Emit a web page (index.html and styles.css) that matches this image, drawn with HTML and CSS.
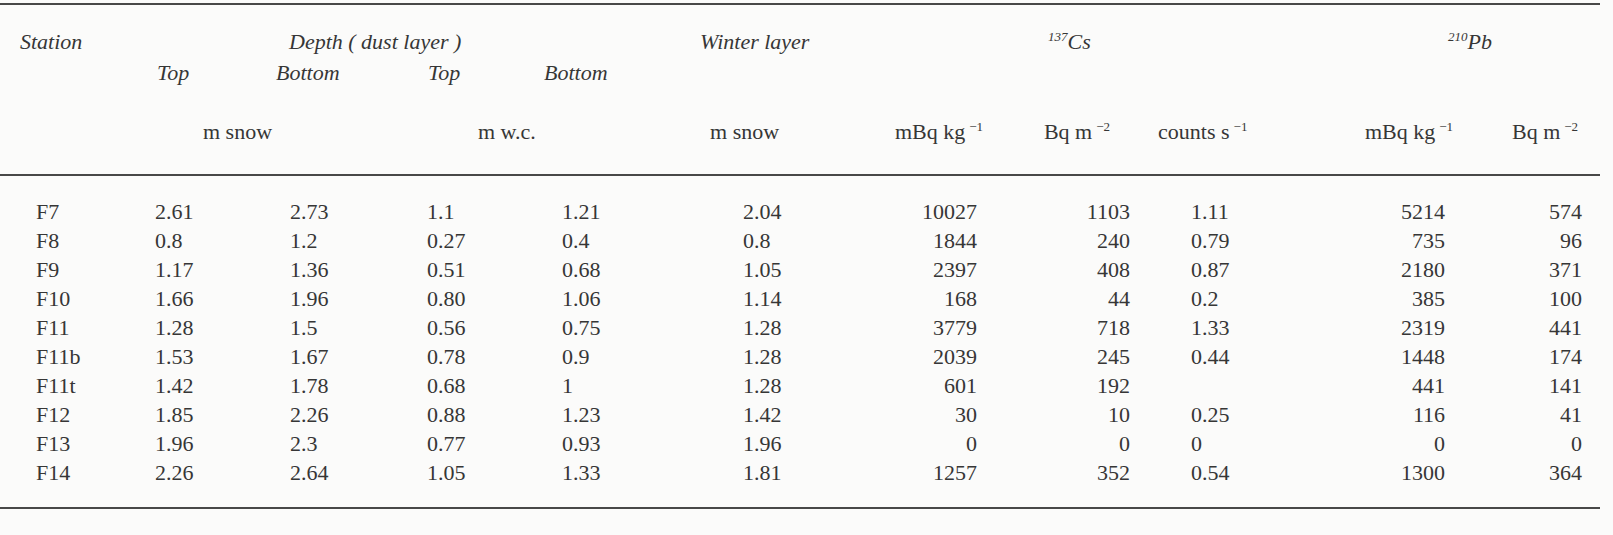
FILE: index.html
```html
<!DOCTYPE html>
<html>
<head>
<meta charset="utf-8">
<link rel="stylesheet" href="styles.css">
</head>
<body>
<table class="data">
  <colgroup>
    <col class="w150"><col class="w120"><col class="w150"><col class="w120"><col class="w160"><col class="w160"><col class="w140"><col class="w150"><col class="w150"><col class="w170"><col class="w130">
  </colgroup>
  <thead>
    <tr class="r1">
      <th class="h-station">Station</th>
      <th colspan="4" class="h-depth">Depth ( dust layer )</th>
      <th class="h-winter">Winter layer</th>
      <th colspan="3" class="h-cs"><sup>137</sup>Cs</th>
      <th colspan="2" class="h-pb"><sup>210</sup>Pb</th>
    </tr>
    <tr class="r2">
      <th></th>
      <th class="s-top1">Top</th>
      <th class="s-bot1">Bottom</th>
      <th class="s-top2">Top</th>
      <th class="s-bot2">Bottom</th>
      <th></th><th></th><th></th><th></th><th></th><th></th>
    </tr>
    <tr class="r3">
      <th></th>
      <th colspan="2" class="u-snow1">m snow</th>
      <th colspan="2" class="u-we">m w.c.</th>
      <th class="u-snow2">m snow</th>
      <th class="u-cskg">mBq kg<sup>−1</sup></th>
      <th class="u-csm">Bq m<sup>−2</sup></th>
      <th class="u-counts">counts s<sup>−1</sup></th>
      <th class="u-pbkg">mBq kg<sup>−1</sup></th>
      <th class="u-pbm">Bq m<sup>−2</sup></th>
    </tr>
  </thead>
  <tbody>
    <tr><td class="c1">F7</td><td class="c2">2.61</td><td class="c3">2.73</td><td class="c4">1.1</td><td class="c5">1.21</td><td class="c6">2.04</td><td class="c7">10027</td><td class="c8">1103</td><td class="c9">1.11</td><td class="c10">5214</td><td class="c11">574</td></tr>
    <tr><td class="c1">F8</td><td class="c2">0.8</td><td class="c3">1.2</td><td class="c4">0.27</td><td class="c5">0.4</td><td class="c6">0.8</td><td class="c7">1844</td><td class="c8">240</td><td class="c9">0.79</td><td class="c10">735</td><td class="c11">96</td></tr>
    <tr><td class="c1">F9</td><td class="c2">1.17</td><td class="c3">1.36</td><td class="c4">0.51</td><td class="c5">0.68</td><td class="c6">1.05</td><td class="c7">2397</td><td class="c8">408</td><td class="c9">0.87</td><td class="c10">2180</td><td class="c11">371</td></tr>
    <tr><td class="c1">F10</td><td class="c2">1.66</td><td class="c3">1.96</td><td class="c4">0.80</td><td class="c5">1.06</td><td class="c6">1.14</td><td class="c7">168</td><td class="c8">44</td><td class="c9">0.2</td><td class="c10">385</td><td class="c11">100</td></tr>
    <tr><td class="c1">F11</td><td class="c2">1.28</td><td class="c3">1.5</td><td class="c4">0.56</td><td class="c5">0.75</td><td class="c6">1.28</td><td class="c7">3779</td><td class="c8">718</td><td class="c9">1.33</td><td class="c10">2319</td><td class="c11">441</td></tr>
    <tr><td class="c1">F11b</td><td class="c2">1.53</td><td class="c3">1.67</td><td class="c4">0.78</td><td class="c5">0.9</td><td class="c6">1.28</td><td class="c7">2039</td><td class="c8">245</td><td class="c9">0.44</td><td class="c10">1448</td><td class="c11">174</td></tr>
    <tr><td class="c1">F11t</td><td class="c2">1.42</td><td class="c3">1.78</td><td class="c4">0.68</td><td class="c5">1</td><td class="c6">1.28</td><td class="c7">601</td><td class="c8">192</td><td class="c9"></td><td class="c10">441</td><td class="c11">141</td></tr>
    <tr><td class="c1">F12</td><td class="c2">1.85</td><td class="c3">2.26</td><td class="c4">0.88</td><td class="c5">1.23</td><td class="c6">1.42</td><td class="c7">30</td><td class="c8">10</td><td class="c9">0.25</td><td class="c10">116</td><td class="c11">41</td></tr>
    <tr><td class="c1">F13</td><td class="c2">1.96</td><td class="c3">2.3</td><td class="c4">0.77</td><td class="c5">0.93</td><td class="c6">1.96</td><td class="c7">0</td><td class="c8">0</td><td class="c9">0</td><td class="c10">0</td><td class="c11">0</td></tr>
    <tr><td class="c1">F14</td><td class="c2">2.26</td><td class="c3">2.64</td><td class="c4">1.05</td><td class="c5">1.33</td><td class="c6">1.81</td><td class="c7">1257</td><td class="c8">352</td><td class="c9">0.54</td><td class="c10">1300</td><td class="c11">364</td></tr>
  </tbody>
</table>
</body>
</html>
```

FILE: styles.css
```css
html, body {
  margin: 0;
  padding: 0;
  background: #fbfbfa;
}

body {
  padding-top: 3px;
}

.data {
  border-collapse: collapse;
  table-layout: fixed;
  width: 1600px;
  font-family: "Liberation Serif", "Times New Roman", serif;
  color: #363636;
  border-top: 2px solid #484848;
  border-bottom: 2px solid #484848;
}

.w120 { width: 120px; }
.w130 { width: 130px; }
.w140 { width: 140px; }
.w150 { width: 150px; }
.w160 { width: 160px; }
.w170 { width: 170px; }

.data th,
.data td {
  padding: 0;
  font-weight: normal;
  white-space: nowrap;
  text-align: left;
  vertical-align: top;
}

.data sup {
  font-size: 13px;
  line-height: 0;
  vertical-align: 8px;
}

/* header row 1 */
.r1 th {
  font-style: italic;
  font-size: 22px;
  line-height: 24px;
  padding-top: 25px;
}
.r1 .h-station { padding-left: 20px; }
.r1 .h-depth { padding-left: 139px; }
.r1 .h-winter { padding-left: 0; }
.r1 .h-cs { padding-left: 188px; }
.r1 .h-pb { padding-left: 148px; }

/* header row 2 */
.r2 th {
  font-style: italic;
  font-size: 22px;
  line-height: 24px;
  padding-top: 7px;
}
.r2 .s-top1 { padding-left: 7px; }
.r2 .s-bot1 { padding-left: 6px; }
.r2 .s-top2 { padding-left: 8px; }
.r2 .s-bot2 { padding-left: 4px; }

/* units row */
.r3 th {
  font-size: 22px;
  line-height: 24px;
  padding-top: 35px;
  padding-bottom: 30px;
  border-bottom: 2px solid #484848;
}
.r3 sup { margin-left: 4px; }
.r3 .u-snow1 { padding-left: 53px; }
.r3 .u-we { padding-left: 58px; }
.r3 .u-snow2 { padding-left: 10px; }
.r3 .u-cskg { text-align: right; padding-right: 17px; }
.r3 .u-csm { text-align: right; padding-right: 40px; }
.r3 .u-counts { padding-left: 8px; }
.r3 .u-pbkg { text-align: right; padding-right: 17px; }
.r3 .u-pbm { text-align: right; padding-right: 22px; }

/* body */
.data tbody td {
  font-size: 22px;
  line-height: 29px;
}
.data tbody tr:first-child td { padding-top: 21px; }
.data tbody tr:last-child td { padding-bottom: 20px; }

.data .c1 { padding-left: 36px; }
.data .c2 { padding-left: 5px; }
.data .c3 { padding-left: 20px; }
.data .c4 { padding-left: 7px; }
.data .c5 { padding-left: 22px; }
.data .c6 { padding-left: 43px; }
.data .c7 { text-align: right; padding-right: 23px; }
.data .c8 { text-align: right; padding-right: 20px; }
.data .c9 { padding-left: 41px; }
.data .c10 { text-align: right; padding-right: 25px; }
.data .c11 { text-align: right; padding-right: 18px; }
```
